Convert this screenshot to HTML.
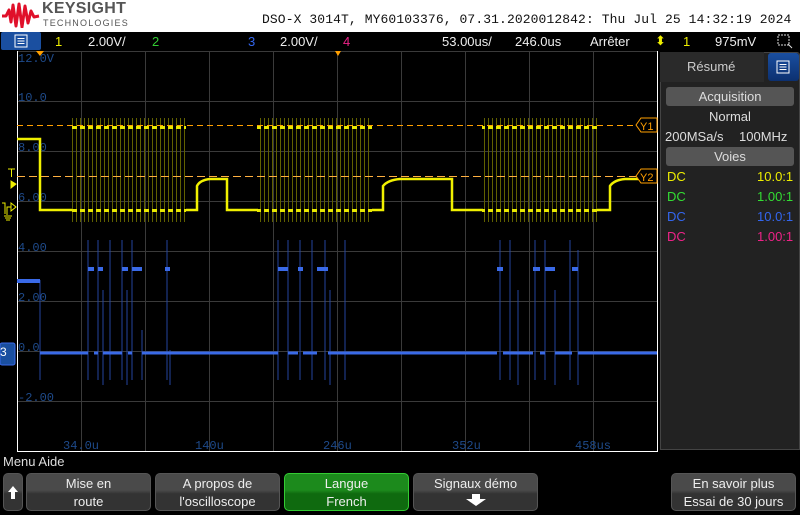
<!DOCTYPE html>
<html><head><meta charset="utf-8"><style>
*{margin:0;padding:0;box-sizing:border-box}
body{width:800px;height:512px;overflow:hidden;background:#000;font-family:"Liberation Sans",sans-serif;position:relative}
.hdr{position:absolute;left:0;top:0;width:800px;height:32px;background:#fff}
.t{position:absolute;white-space:nowrap}
.btn{position:absolute;top:473px;height:38px;border-radius:5px;background:linear-gradient(#4a4a4a 0,#4a4a4a 45%,#333 55%,#333 100%);border:1px solid #555;color:#eee;font-size:13px;text-align:center;line-height:18px;padding-top:1px}
</style></head><body>
<div class="hdr"></div>
<svg style="position:absolute;left:2px;top:2px" width="38" height="26" viewBox="0 0 38 26"><path d="M0 14 L4 14 L7 8 L9 20 L11 3 L14 24 L17 2 L20 25 L23 4 L26 21 L29 9 L32 15 L37 14" stroke="#e0102a" stroke-width="3" fill="none" stroke-linejoin="round"/></svg>
<div class="t" style="left:42px;top:0px;font-size:16px;font-weight:bold;color:#555;letter-spacing:0.3px">KEYSIGHT</div>
<div class="t" style="left:43px;top:18px;font-size:9px;color:#555;letter-spacing:1.2px">TECHNOLOGIES</div>
<div class="t" style="left:262px;top:12px;font-size:13px;color:#111;font-family:'Liberation Mono',monospace;letter-spacing:0.1px">DSO-X 3014T, MY60103376, 07.31.2020012842: Thu Jul 25 14:32:19 2024</div>
<!-- top status -->
<div style="position:absolute;left:0;top:32px;width:800px;height:19px;background:#000"></div>
<div style="position:absolute;left:1px;top:32px;width:40px;height:18px;background:#1a4fa0;border-radius:2px"></div>
<svg style="position:absolute;left:14px;top:34px" width="14" height="14"><rect x="1" y="1" width="12" height="12" fill="none" stroke="#fff"/><path d="M3.5 4.5H10.5M3.5 7H10.5M3.5 9.5H10.5" stroke="#fff"/></svg>
<div class="t" style="left:55px;top:34px;font-size:13px;color:#ee0">1</div>
<div class="t" style="left:88px;top:34px;font-size:13px;color:#eee">2.00V/</div>
<div class="t" style="left:152px;top:34px;font-size:13px;color:#3c3">2</div>
<div class="t" style="left:248px;top:34px;font-size:13px;color:#36e">3</div>
<div class="t" style="left:280px;top:34px;font-size:13px;color:#eee">2.00V/</div>
<div class="t" style="left:343px;top:34px;font-size:13px;color:#e28">4</div>
<div class="t" style="left:442px;top:34px;font-size:13px;color:#eee">53.00us/</div>
<div class="t" style="left:515px;top:34px;font-size:13px;color:#eee">246.0us</div>
<div class="t" style="left:590px;top:34px;font-size:13px;color:#eee">Arrêter</div>
<div class="t" style="left:655px;top:33px;font-size:13px;color:#ee0">⬍</div>
<div class="t" style="left:683px;top:34px;font-size:13px;color:#ee0">1</div>
<div class="t" style="left:715px;top:34px;font-size:13px;color:#eee">975mV</div>
<svg style="position:absolute;left:777px;top:33px" width="16" height="16"><rect x="1" y="2" width="11" height="10" fill="none" stroke="#ddd" stroke-dasharray="2 1"/><path d="M11 11L15 15" stroke="#ddd"/></svg>

<svg style="position:absolute;left:0;top:51px" width="660" height="401" viewBox="0 51 660 401">
<defs>
<pattern id="vl" x="0" y="0" width="4" height="10" patternUnits="userSpaceOnUse"><rect x="0" y="0" width="1" height="10" fill="#606000"/></pattern>
<pattern id="db" x="0" y="0" width="8" height="10" patternUnits="userSpaceOnUse"><rect x="0" y="0" width="5" height="10" fill="#e8e800"/></pattern>
</defs>
<rect x="17" y="51" width="640" height="400" fill="#000"/>
<g stroke="#3a3a3a" stroke-width="1">
<path d="M81.5 51V451M145.5 51V451M209.5 51V451M273.5 51V451M337.5 51V451M401.5 51V451M465.5 51V451M529.5 51V451M593.5 51V451"/>
<path d="M17 51.5H657M17 101.5H657M17 151.5H657M17 201.5H657M17 251.5H657M17 301.5H657M17 351.5H657M17 401.5H657"/>
</g>
<path d="M17 451.5H658M17.5 51V452M657.5 51V452" stroke="#fff"/>
<g fill="#1e4a8a" font-family="Liberation Mono,monospace" font-size="12">
<text x="18" y="62">12.0V</text><text x="18" y="101">10.0</text><text x="18" y="151">8.00</text><text x="18" y="201">6.00</text><text x="18" y="251">4.00</text><text x="18" y="301">2.00</text><text x="18" y="351">0.0</text><text x="18" y="401">-2.00</text>
<text x="63" y="449">34.0u</text><text x="195" y="449">140u</text><text x="323" y="449">246u</text><text x="452" y="449">352u</text><text x="575" y="449">458us</text>
</g>
<g>
<rect x="71" y="118" width="115" height="104" fill="url(#vl)"/>
<rect x="257" y="118" width="115" height="104" fill="url(#vl)"/>
<rect x="482" y="118" width="115" height="104" fill="url(#vl)"/>
<rect x="71" y="126" width="115" height="3" fill="url(#db)"/>
<rect x="257" y="126" width="115" height="3" fill="url(#db)"/>
<rect x="482" y="126" width="115" height="3" fill="url(#db)"/>
<rect x="71" y="209" width="115" height="3" fill="url(#db)"/>
<rect x="257" y="209" width="115" height="3" fill="url(#db)"/>
<rect x="482" y="209" width="115" height="3" fill="url(#db)"/>
</g>
<path d="M17 139H40V210H72M186 210H197V186Q200 180 210 179H227V210H258M372 210H383V186Q388 180 400 179H452V210H483M597 210H610V186Q614 180 625 179H640" stroke="#f0f000" stroke-width="2.5" fill="none"/>
<path d="M17 125.5H640" stroke="#ff9f00" stroke-dasharray="6 4"/>
<path d="M17 176.5H640" stroke="#ffb040" stroke-dasharray="8 4"/>
<g stroke="#24459e" stroke-width="1" fill="none">
<path d="M88 240V380M98 240V380M103 290V385M110 240V380M122 240V380M127 290V385M132 240V380M142 330V380M167 240V380M170 350V385M278 240V380M288 240V380M300 240V380M312 240V380M325 240V380M330 290V385M345 240V380M500 240V380M510 240V380M518 290V385M535 240V380M545 240V380M555 290V385M570 240V380M578 250V385M40 280V380"/>
</g>
<path d="M17 281H40M88 269H94M98 269H103M122 269H128M132 269H142M165 269H170M278 269H288M298 269H303M317 269H328M497 269H503M533 269H540M545 269H555M572 269H578" stroke="#3a6ae8" stroke-width="4"/>
<path d="M40 353H88M94 353H98M103 353H122M128 353H132M142 353H278M288 353H298M303 353H317M328 353H497M503 353H533M540 353H545M555 353H572M578 353H657" stroke="#3a6ae8" stroke-width="3"/>
<path d="M335 51L341 51L338 56Z" fill="#ff9f00"/>
<path d="M36 51L44 51L40 56Z" fill="#ff9f00"/>
<path d="M636 125L641 118H657V132H641Z" fill="#000" stroke="#ff9f00"/>
<path d="M636 176L641 169H657V183H641Z" fill="#000" stroke="#ff9f00"/>
<text x="640" y="130" font-size="11" fill="#ff9f00" font-family="Liberation Sans">Y1</text>
<text x="640" y="181" font-size="11" fill="#ff9f00" font-family="Liberation Sans">Y2</text>
<path d="M8 169H15M11.5 169V177M11 181L16 184L11 188Z" stroke="#ee0" fill="#ee0"/>
<path d="M2 203H5V214M7 215V207H11M11 203L16 207L11 211Z M4 216H12M5 218H11M6 220H10" stroke="#ee0" fill="none"/>
<rect x="0" y="343" width="15" height="22" rx="2" fill="#1a4fa0" stroke="#3a6ae8"/>
<text x="0" y="356" font-size="12" fill="#fff">3</text>
</svg>
<div style="position:absolute;left:660px;top:52px;width:140px;height:398px;background:#222;border:1px solid #444;border-radius:3px 3px 0 0"></div>
<div style="position:absolute;left:660px;top:52px;width:104px;height:30px;background:#2a2a2a"></div>
<div class="t" style="left:687px;top:59px;font-size:13px;color:#ccc">Résumé</div>
<div style="position:absolute;left:768px;top:53px;width:31px;height:28px;background:linear-gradient(#1a4fa0,#0c3070);border-radius:3px"></div>
<svg style="position:absolute;left:776px;top:60px" width="14" height="14"><rect x="1" y="1" width="12" height="12" fill="none" stroke="#fff"/><path d="M3.5 4.5H10.5M3.5 7H10.5M3.5 9.5H10.5" stroke="#fff"/></svg>
<div style="position:absolute;left:666px;top:87px;width:128px;height:19px;background:#555;border-radius:3px;color:#ddd;font-size:13px;text-align:center;line-height:19px">Acquisition</div>
<div class="t" style="left:709px;top:109px;font-size:13px;color:#ddd">Normal</div>
<div class="t" style="left:665px;top:129px;font-size:13px;color:#ddd">200MSa/s</div>
<div class="t" style="left:739px;top:129px;font-size:13px;color:#ddd">100MHz</div>
<div style="position:absolute;left:666px;top:147px;width:128px;height:19px;background:#555;border-radius:3px;color:#ddd;font-size:13px;text-align:center;line-height:19px">Voies</div>
<div class="t" style="left:667px;top:169px;font-size:13px;color:#ee0">DC</div><div class="t" style="left:757px;top:169px;font-size:13px;color:#ee0">10.0:1</div>
<div class="t" style="left:667px;top:189px;font-size:13px;color:#3d3">DC</div><div class="t" style="left:757px;top:189px;font-size:13px;color:#3d3">1.00:1</div>
<div class="t" style="left:667px;top:209px;font-size:13px;color:#36e">DC</div><div class="t" style="left:757px;top:209px;font-size:13px;color:#36e">10.0:1</div>
<div class="t" style="left:667px;top:229px;font-size:13px;color:#e28">DC</div><div class="t" style="left:757px;top:229px;font-size:13px;color:#e28">1.00:1</div>
<div class="t" style="left:3px;top:454px;font-size:13px;color:#ddd">Menu Aide</div>
<div class="btn" style="left:3px;width:20px"><svg width="14" height="30" style="margin-top:5px"><path d="M7 6L12 12H9V19H5V12H2Z" fill="#fff"/></svg></div>
<div class="btn" style="left:26px;width:125px">Mise en<br>route</div>
<div class="btn" style="left:155px;width:125px">A propos de<br>l'oscilloscope</div>
<div class="btn" style="left:284px;width:125px;background:linear-gradient(#1c8a1c 0,#1c8a1c 45%,#0f6a0f 55%,#0f6a0f 100%);border-color:#3c3">Langue<br>French</div>
<div class="btn" style="left:413px;width:125px">Signaux démo<br><svg width="24" height="14"><path d="M8 1H16V6H22L12 13L2 6H8Z" fill="#fff"/></svg></div>
<div class="btn" style="left:671px;width:125px">En savoir plus<br>Essai de 30 jours</div>
</body></html>
